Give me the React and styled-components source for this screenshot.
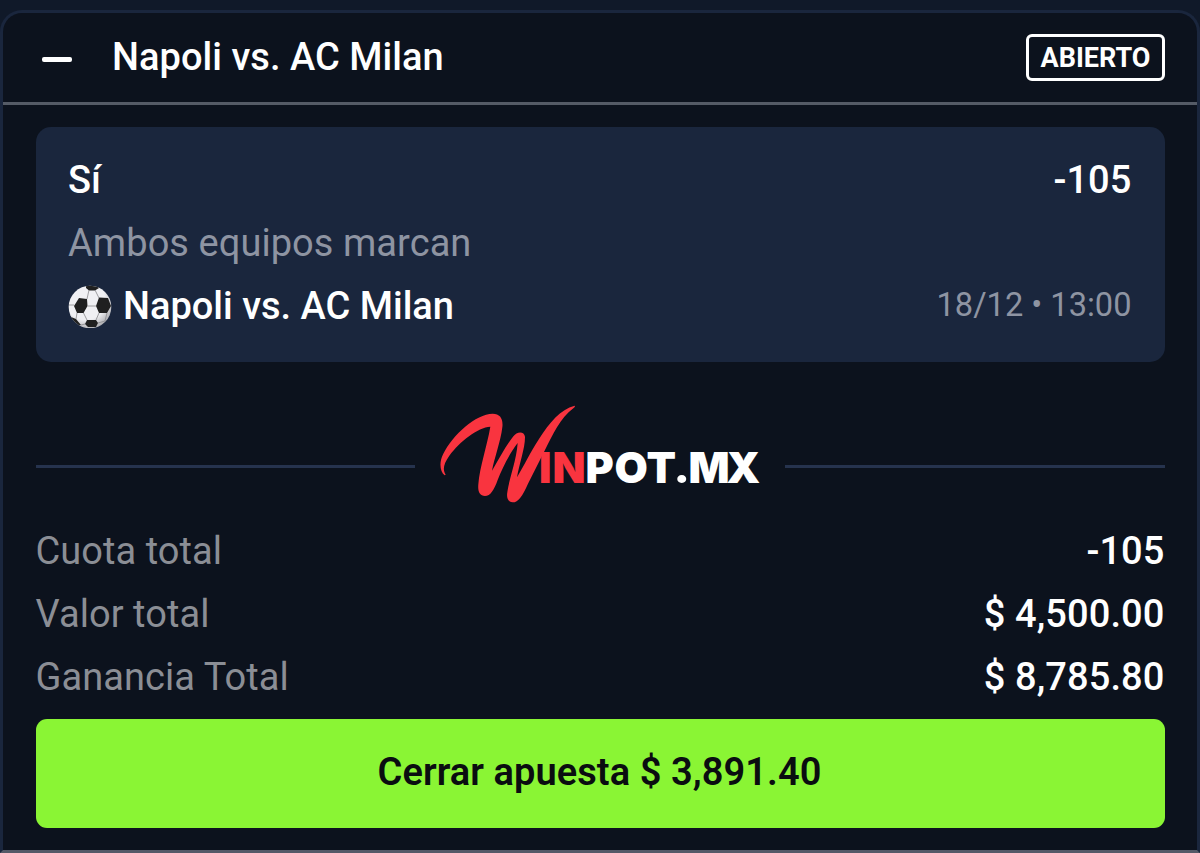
import React from "react";
import styled, { createGlobalStyle } from "styled-components";

const GlobalStyle = createGlobalStyle`
    * {
        box-sizing: border-box;
    }

    body {
        margin: 0;
        background: #101929;
        font-family: Roboto, sans-serif;
        overflow: hidden;
    }
`;

const Wrapper = styled.div`
    height: 853px;
    padding: 10px 0 0;
    overflow: hidden;
`;

const Ticket = styled.section`
    height: 843px;
    border: 3px solid #1a263d;
    border-bottom: 3px solid #555968;
    border-radius: 22px 22px 0 0;
    background: #0c121d;
`;

const Header = styled.header`
    display: flex;
    align-items: center;
    height: 92px;
    padding: 0 32px 0 39px;
    border-bottom: 3px solid #555b66;
`;

const Minus = styled.span`
    width: 30px;
    height: 5px;
    margin: 3px 40px 0 0;
    border-radius: 2px;
    background: white;
`;

const Title = styled.h1`
    flex: 1;
    margin: 0 0 2px;
    color: white;
    font-size: 38px;
    font-weight: 500;
    line-height: 44px;
    letter-spacing: 0.04px;
`;

const Status = styled.span`
    display: flex;
    align-items: center;
    justify-content: center;
    width: 139px;
    height: 47px;
    border: 3px solid white;
    border-radius: 6px;
    color: white;
    font-size: 27px;
    font-weight: 700;
`;

const Body = styled.div`
    padding: 22px 32.5px 0 32.5px;
`;

const Selection = styled.div`
    height: 235px;
    padding: 22px 33px 0 32.5px;
    border-radius: 15px;
    background: #1a263d;
`;

const Row = styled.div`
    display: flex;
    align-items: center;
    justify-content: space-between;
    height: 62.8px;
`;

const Strong = styled.span`
    color: white;
    font-size: 38px;
    font-weight: 500;
    letter-spacing: ${(props) => props.$spacing || "0"};
`;

const Muted = styled.span`
    color: ${(props) => (props.$onCard ? "#8e94a2" : "#8b8e95")};
    font-size: 38px;
    letter-spacing: 0.06px;
`;

const Match = styled.div`
    display: flex;
    align-items: center;
    gap: 11px;
`;

const Kickoff = styled.span`
    margin-bottom: 2px;
    color: #8e94a2;
    font-size: 32.6px;
`;

const Brand = styled.div`
    display: flex;
    align-items: center;
    height: 115px;
    margin-top: 33px;
`;

const Rule = styled.span`
    flex: 1;
    height: 3px;
    margin-top: 28px;
    background: #26334e;
`;

const Logo = styled.svg`
    width: 340px;
    height: 115px;
    margin: 0 15px;
    font-family: Inter, sans-serif;
    font-size: 43px;
    font-weight: 900;
`;

const Totals = styled.div`
    margin-top: 10px;
`;

const CashOut = styled.button`
    display: block;
    width: 100%;
    height: 109px;
    margin-top: 10.6px;
    padding: 0 1px 3px 0;
    border: 0;
    border-radius: 11px;
    background: #8af534;
    color: #0a0d10;
    font-family: inherit;
    font-size: 38px;
    font-weight: 600;
    letter-spacing: 0.07px;
`;

const totals = [
    { label: "Cuota total", value: "-105" },
    { label: "Valor total", value: "$ 4,500.00" },
    { label: "Ganancia Total", value: "$ 8,785.80" },
];

function SoccerBall() {
    return (
        <svg width="44" height="44" viewBox="0 -1 44 44">
            <defs>
                <clipPath id="ball">
                    <circle cx="22" cy="22" r="21.3" />
                </clipPath>
                <radialGradient id="shade" cx="0.4" cy="0.35" r="0.68">
                    <stop offset="0.65" stopColor="#f0f0f3" />
                    <stop offset="1" stopColor="#a9a9ad" />
                </radialGradient>
            </defs>
            <g clipPath="url(#ball)">
                <rect width="44" height="44" fill="url(#shade)" />
                <path d="M11 13L19 14L19.5 21L15.5 28H9L6 21ZM31 12.5L40 13L43 21L39 28H31L28 21ZM18 0L29 0L31 3L27 5.5H21L18 3ZM19 35L28 35L30 38L28 42H20L17 39ZM3 32L8 34L13 40L4 42ZM43 31L40 38L44 42Z" fill="#202020" />
                <path d="M0 20H6M19 14L21 5M19.5 21H28M15.5 28L19 35M31 28L28 35M27 5L31 13M39 28L37 36L30 38M9 28L8 34M17 39L13 40" fill="none" stroke="#88888c" strokeWidth="0.8" />
            </g>
        </svg>
    );
}

function WinpotLogo() {
    return (
        <Logo viewBox="0 0 340 115">
            <path
                transform="scale(0.3333)"
                fill="#f9343f"
                d="M44 241C29 230 27 200 40 176C69 119 137 57 188 56C211 56 220 72 217 97C212 139 193 190 186 227C208 190 225 157 249 125C261 108 283 108 285 125C286 157 268 207 261 247C281 214 301 172 327 132C359 82 391 43 434 32C436 34 434 38 430 40C390 70 369 118 345 165L294 266C277 304 265 322 248 322C234 321 229 309 232 292C237 252 259 199 263 144C237 178 216 222 203 255C192 286 181 303 165 303C149 302 143 290 145 268C149 216 171 154 181 95C143 97 90 139 58 182C41 206 37 224 47 239Z"
            />
            <text x="109 122.5" y="88.4" fill="#f9343f">IN</text>
            <text y="88.4" fill="white">
                <tspan x="155.5 184.5 216.5">POT</tspan>
                <tspan x="244.5" fontFamily="Roboto" fontSize="49">.</tspan>
                <tspan x="258.5 296.5">MX</tspan>
            </text>
        </Logo>
    );
}

function App() {
    return (
        <>
            <GlobalStyle />
            <Wrapper>
                <Ticket>
                    <Header>
                        <Minus />
                        <Title>Napoli vs. AC Milan</Title>
                        <Status>ABIERTO</Status>
                    </Header>
                    <Body>
                        <Selection>
                            <Row>
                                <Strong>Sí</Strong>
                                <Strong $spacing="0.1px">-105</Strong>
                            </Row>
                            <Row>
                                <Muted $onCard>Ambos equipos marcan</Muted>
                            </Row>
                            <Row>
                                <Match>
                                    <SoccerBall />
                                    <Strong>Napoli vs. AC Milan</Strong>
                                </Match>
                                <Kickoff>18/12 • 13:00</Kickoff>
                            </Row>
                        </Selection>
                        <Brand>
                            <Rule />
                            <WinpotLogo />
                            <Rule />
                        </Brand>
                        <Totals>
                            {totals.map((item) => (
                                <Row key={item.label}>
                                    <Muted>{item.label}</Muted>
                                    <Strong $spacing="0.1px">{item.value}</Strong>
                                </Row>
                            ))}
                        </Totals>
                        <CashOut>Cerrar apuesta $ 3,891.40</CashOut>
                    </Body>
                </Ticket>
            </Wrapper>
        </>
    );
}

export default App;
